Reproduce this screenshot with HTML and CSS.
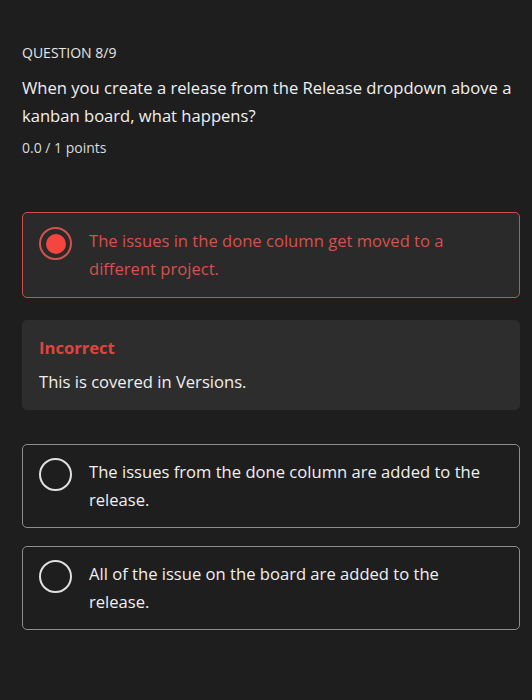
FILE: index.html
```html
<!DOCTYPE html>
<html>
<head>
<meta charset="utf-8">
<link rel="stylesheet" href="styles.css">
</head>
<body>
<div class="page">
  <div class="qnum">QUESTION 8/9</div>
  <div class="qtext">When you create a release from the Release dropdown above a kanban board, what happens?</div>
  <div class="points">0.0 / 1 points</div>

  <div class="option selected">
    <span class="radio"><span class="dot"></span></span>
    <span class="otext">The issues in the done column get moved to a different project.</span>
  </div>

  <div class="feedback">
    <div class="fb-title">Incorrect</div>
    <div class="fb-text">This is covered in Versions.</div>
  </div>

  <div class="option">
    <span class="radio"></span>
    <span class="otext">The issues from the done column are added to the release.</span>
  </div>

  <div class="option">
    <span class="radio"></span>
    <span class="otext">All of the issue on the board are added to the release.</span>
  </div>
</div>
</body>
</html>
```
FILE: styles.css
```css
html, body {
  margin: 0;
  padding: 0;
  background: #1e1e1e;
}
body {
  font-family: "Open Sans", "Noto Sans", sans-serif;
  color: #ececec;
  width: 532px;
  height: 700px;
}
.page {
  padding: 43px 12px 0 22px;
}
.qnum {
  font-size: 14px;
  line-height: 20px;
  color: #e6e6e6;
}
.qtext {
  margin-top: 11px;
  font-size: 16.6px;
  line-height: 28px;
  color: #f0f0f0;
}
.points {
  margin-top: 8px;
  font-size: 14px;
  line-height: 20px;
  color: #dcdcdc;
}
.option {
  display: flex;
  align-items: flex-start;
  gap: 17px;
  border: 1.5px solid #8d8d8d;
  border-radius: 5px;
  padding: 13px 24px 13px 16px;
}
.option.selected {
  margin-top: 54px;
  border-color: #c9504c;
  background: #2a2a2a;
  padding-top: 14px;
  padding-bottom: 14px;
}
.option + .option { margin-top: 18px; }
.radio {
  flex: none;
  width: 29px;
  height: 29px;
  border: 2px solid #e0e0e0;
  border-radius: 50%;
  display: flex;
  align-items: center;
  justify-content: center;
}
.selected .radio { border-color: #d4524d; }
.dot {
  width: 20px;
  height: 20px;
  border-radius: 50%;
  background: #f4453e;
}
.otext {
  font-size: 16.6px;
  line-height: 28px;
  color: #f0f0f0;
}
.selected .otext { color: #d6514c; }
.feedback {
  margin-top: 22px;
  background: #2d2d2d;
  border-radius: 5px;
  padding: 17px;
  margin-bottom: 34px;
}
.fb-title {
  font-weight: 700;
  font-size: 16.6px;
  line-height: 22px;
  color: #e0443e;
}
.fb-text {
  margin-top: 12px;
  font-size: 16.6px;
  line-height: 22px;
  color: #f0f0f0;
}
```
